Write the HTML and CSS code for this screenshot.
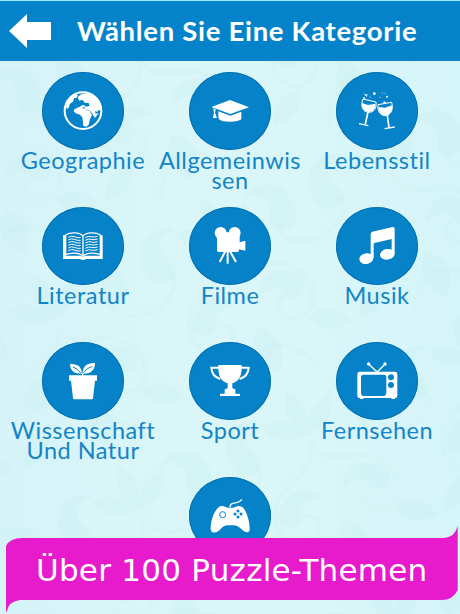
FILE: index.html
```html
<!DOCTYPE html>
<html lang="de">
<head>
<meta charset="utf-8">
<title>Wählen Sie Eine Kategorie</title>
<link rel="stylesheet" href="styles.css">
</head>
<body>
<div class="screen">
  <svg class="backdrop" width="460" height="614" aria-hidden="true">
    <defs>
      <pattern id="damask" width="184" height="210" patternUnits="userSpaceOnUse" patternTransform="translate(30 40) rotate(-24)">
        <g class="leaf">
          <path d="M14 62C0 30 28 4 56 22c-20-2-28 12-18 28 8 14-10 24-24 12z"/>
          <path d="M92 50c-14-16-10-34 0-46 10 12 14 30 0 46zM92 54c-26 0-36-14-38-28 20 2 34 12 38 28zM92 54c26 0 36-14 38-28-20 2-34 12-38 28z"/>
          <path d="M170 62c14-32-14-58-42-40 20-2 28 12 18 28-8 14 10 24 24 12z"/>
          <path d="M30 118c20-26 46-20 50 0-16-8-26 0-28 14-10 4-20-2-22-14zM154 118c-20-26-46-20-50 0 16-8 26 0 28 14 10 4 20-2 22-14z"/>
          <path d="M4 178c6-22 24-28 38-22-4 16-18 26-38 22zM180 178c-6-22-24-28-38-22 4 16 18 26 38 22zM92 194c-18-16-18-34 0-50 18 16 18 34 0 50z"/>
        </g>
        <g class="vine">
          <path d="M92 60c-4 34-38 24-56 44s-8 50 14 48 20-28 4-24M92 60c4 34 38 24 56 44s8 50-14 48-20-28-4-24"/>
          <path d="M0 88c26-2 36-14 34-30M184 88c-26-2-36-14-34-30M56 200c6-22 20-30 36-34M128 200c-6-22-20-30-36-34"/>
        </g>
      </pattern>
    </defs>
    <rect width="460" height="614" fill="url(#damask)"/>
  </svg>

  <header class="header">
    <svg class="back" viewBox="0 0 42 34"><path d="M0 17 18 0v8h24v18H18v8z"/></svg>
    <h1 class="title">Wählen Sie Eine Kategorie</h1>
  </header>

  <main class="grid">
    <section class="category">
      <svg class="disc" viewBox="36 21 246 234">
        <circle class="line" cx="159" cy="137" r="55" stroke-width="6"/>
        <path d="M108 120c5-16 18-28 30-32l6 2-4 8-8 2-3 10-9 6-4 12-6 4z"/>
        <path d="M143 97l10-9 14-3c20 2 37 15 44 33l3 19-8-2-4 5-7-1 2 7 9-2-11 15-6-10-8-11-9-4-11 1 4-8-10 1-6 5-2-6 12-8 10 6 10-3-3-8-12-1-7-9-9 3z"/>
        <path d="M133 133l12-6 13 2 8 6 13 2 7 14-6 11-4 18-8 5-8-3-3-25-7-8-13-4-6-6z"/>
      </svg>
      <h2 class="label">Geographie</h2>
    </section>
    <section class="category">
      <svg class="disc" viewBox="117 21 246 234">
        <path d="M184 126 240 105l57 22-56 20z"/>
        <path d="M205 139l36 13 33-12v22c-10 10-56 12-67 1l-2-8zM190 130l7 3-2 11 6 15h-12l3-15z"/>
      </svg>
      <h2 class="label">Allgemeinwis<br>sen</h2>
    </section>
    <section class="category">
      <svg class="disc" viewBox="48 21 246 234">
        <g class="line" stroke-width="3">
          <path d="M129 102l39 9c3 20-8 32-22 31-17-1-26-18-17-40zM174 119l41-7c6 21-2 38-18 40-16 0-25-12-23-33z"/>
          <path stroke-width="5" d="M144 141l-8 36M202 151l5 36"/>
          <path stroke-width="4" d="M117 176l28 6M194 191l30-5"/>
        </g>
        <path d="M126 114l18 6 23-4c-1 17-10 25-21 25-13-1-21-10-20-27zM175 126l20 2 21-7c2 18-6 29-18 31-13 0-22-8-23-26z"/>
        <path d="M132 85l7 4 6-2-5 5 2 5-6-5zM130 97h5v4h-5zM191 109l7 2-2 6-6-1z"/>
        <circle cx="163" cy="86" r="4"/><circle cx="201" cy="95" r="3"/><circle cx="187" cy="83" r="1.5"/><circle cx="195" cy="85" r="1.5"/><circle cx="151" cy="96" r="1.5"/><circle cx="180" cy="97" r="1.5"/>
      </svg>
      <h2 class="label">Lebensstil</h2>
    </section>

    <section class="category">
      <svg class="disc" viewBox="36 21 246 234">
        <path d="M99 106h8v61h44l8 3 8-3h43v-61h8v71h-51l-4 3h-8l-4-3H99z"/>
        <path class="line" stroke-width="4" d="M107 164v-59c13-9 42-9 52 3 10-12 39-12 52-3v59c-13-7-42-7-52 4-10-11-39-11-52-4zM159 108v58"/>
        <path class="line" stroke-width="3" d="M115 112q10-6 18-2t19 3M115 120q10-6 18-2t19 3M115 128q10-6 18-2t19 3M115 136q10-6 18-2t19 3M115 144q10-6 18-2t19 3M115 152q10-6 18-2t19 3M166 113q10-6 18-3t19-1M166 121q10-6 18-3t19-1M166 129q10-6 18-3t19-1M166 137q10-6 18-3t19-1M166 145q10-6 18-3t19-1M166 153q10-6 18-3t19-1"/>
      </svg>
      <h2 class="label">Literatur</h2>
    </section>
    <section class="category">
      <svg class="disc" viewBox="57 21 246 234">
        <circle cx="152" cy="99" r="18"/><circle cx="194" cy="99" r="18"/>
        <path d="M141 97h63l5 12v18l17-5v30l-19-4v3q0 5-5 5h-56q-5 0-5-5z"/>
        <path class="line" stroke-width="6" d="M166 154l-17 32M173 154v37M180 154l18 32"/>
      </svg>
      <h2 class="label">Filme</h2>
    </section>
    <section class="category">
      <svg class="disc" viewBox="48 21 246 234">
        <path d="M152 102q0-5 5-7l61-14q6-1 6 5v75h-9v-44l-54 13v44h-9z"/>
        <ellipse cx="139" cy="176" rx="21" ry="16" transform="rotate(-9 139 176)"/><ellipse cx="202" cy="163" rx="22" ry="16" transform="rotate(-9 202 163)"/>
      </svg>
      <h2 class="label">Musik</h2>
    </section>

    <section class="category">
      <svg class="disc" viewBox="126 21 246 234">
        <path d="M207 121h84v16h-6l-6 53q0 3-4 3h-52q-4 0-4-3l-6-53h-6z"/>
        <path d="M210 87c25-1 36 10 35 29-20 0-34-6-35-29zM285 84c-25-1-37 10-37 32 20 1 37-7 37-32z"/>
        <path class="line" stroke-width="3" d="M243 112q5 3 5 10 0-7 5-10"/>
        <path class="vein" d="M219 96q15 5 23 18M276 94q-16 5-25 19"/>
      </svg>
      <h2 class="label">Wissenschaft<br>Und Natur</h2>
    </section>
    <section class="category">
      <svg class="disc" viewBox="57 21 246 234">
        <path d="M145 90h70c1 31-6 48-28 55v15l9 3v13h14v7h-60v-7h14v-13l9-3v-15c-22-7-29-24-28-55z"/>
        <path class="line" stroke-width="6" d="M147 98h-23c1 17 9 29 27 34M213 98h23c-1 17-9 29-27 34"/>
      </svg>
      <h2 class="label">Sport</h2>
    </section>
    <section class="category">
      <svg class="disc" viewBox="78 21 246 234">
        <path fill-rule="evenodd" d="M149 110h106q7 0 7 7v65q0 7-7 7v3h-11v-3h-84v3h-10v-3q-8 0-8-7v-65q0-7 7-7zM160 119q-7 0-7 7v46q0 11 7 11h60q9 0 9-11v-46q0-7-9-7zM234 127a9 9 0 0 0 18 0 9 9 0 0 0-18 0zM234 150a9 9 0 0 0 18 0 9 9 0 0 0-18 0z"/>
        <path class="line" stroke-width="4" d="M176 87l23 22h5l21-22"/>
        <circle cx="176" cy="87" r="5"/><circle cx="225" cy="87" r="5"/>
      </svg>
      <h2 class="label">Fernsehen</h2>
    </section>

    <section class="category category-last">
      <svg class="disc" viewBox="87 36 246 234">
        <path d="M181 124c10-3 15 3 22 4h16c8-1 14-8 26-3 11 3 25 43 24 68 0 13-13 10-21 3-11-10-17-15-28-15h-18c-13 0-19 12-28 18-9 6-21 6-22-7-1-23 11-60 29-68z"/>
        <path class="line" stroke-width="4" d="M210 127c0-21 27-6 35-24"/>
        <circle class="ring" cx="188" cy="149" r="9"/>
        <g class="dots"><circle cx="234" cy="138" r="4.5"/><circle cx="234" cy="156" r="4.5"/><circle cx="225" cy="147" r="4.5"/><circle cx="243" cy="147" r="4.5"/></g>
      </svg>
    </section>
  </main>

  <footer class="banner">
    <svg class="ribbon" viewBox="0 0 452 86" aria-hidden="true">
      <path d="M0 20Q4 12 16 12H438Q449 11 451.700 0V64Q447 74 436 74H14Q3 75 .5 86H0z"/>
    </svg>
    <p class="slogan">Über 100 Puzzle-Themen</p>
  </footer>
</div>
</body>
</html>
```
FILE: styles.css
```css
* {
  box-sizing: border-box;
  margin: 0;
}

.screen {
  position: relative;
  display: flex;
  flex-direction: column;
  width: 460px;
  height: 614px;
  overflow: hidden;
  background: linear-gradient(90deg, #d6f4f8, #daf6f8 50%, #d6f5f8);
}

body {
  margin: 0;
  font-family: Lato, "Liberation Sans", sans-serif;
}

.backdrop {
  position: absolute;
  inset: 0;
}

.leaf {
  fill: #c9eeee;
  opacity: 0.38;
}

.vine {
  fill: none;
  stroke: #c9eeee;
  stroke-width: 5;
  opacity: 0.25;
}

.header {
  position: relative;
  display: flex;
  align-items: center;
  flex: none;
  height: 61px;
  padding: 0 0 0 9px;
  border-top: 1px solid #9cebf8;
  background: #0483ca;
}

.back {
  width: 42px;
  height: 34px;
  fill: #fff;
}

.title {
  margin-left: 26px;
  color: #fff;
  font-size: 27.5px;
  font-weight: 700;
  letter-spacing: 0.7px;
  line-height: 34px;
  white-space: nowrap;
}

.grid {
  position: relative;
  display: grid;
  grid-template-columns: repeat(3, 147px);
  grid-auto-rows: 135px;
  justify-content: center;
  padding-top: 11px;
}

.category {
  display: flex;
  flex-direction: column;
  align-items: center;
}

.category-last {
  grid-column: 2;
}

.disc {
  flex: none;
  width: 82px;
  height: 78px;
  border-radius: 50%;
  background: #0582c8;
  box-shadow: inset 0 0 0 1px #0873b1;
  fill: #fff;
}

.line {
  fill: none;
  stroke: #fff;
}

.ring,
.vein {
  fill: none;
  stroke: #0582c8;
  stroke-width: 3;
}

.dots {
  fill: #0582c8;
}

.label {
  color: #1384c8;
  font-size: 23.5px;
  font-weight: 400;
  letter-spacing: 0.5px;
  line-height: 20px;
  text-align: center;
  white-space: nowrap;
}

.banner {
  position: absolute;
  left: 6px;
  top: 526px;
  display: grid;
  width: 452px;
  height: 86px;
}

.ribbon,
.slogan {
  grid-area: 1 / 1;
}

.ribbon {
  width: 452px;
  height: 86px;
  fill: #e71bcb;
}

.slogan {
  position: relative;
  padding: 25px 0 0 30px;
  color: #fff;
  font-family: "DejaVu Sans", sans-serif;
  font-size: 31px;
  letter-spacing: 0.25px;
  line-height: 38px;
  white-space: nowrap;
}
```
